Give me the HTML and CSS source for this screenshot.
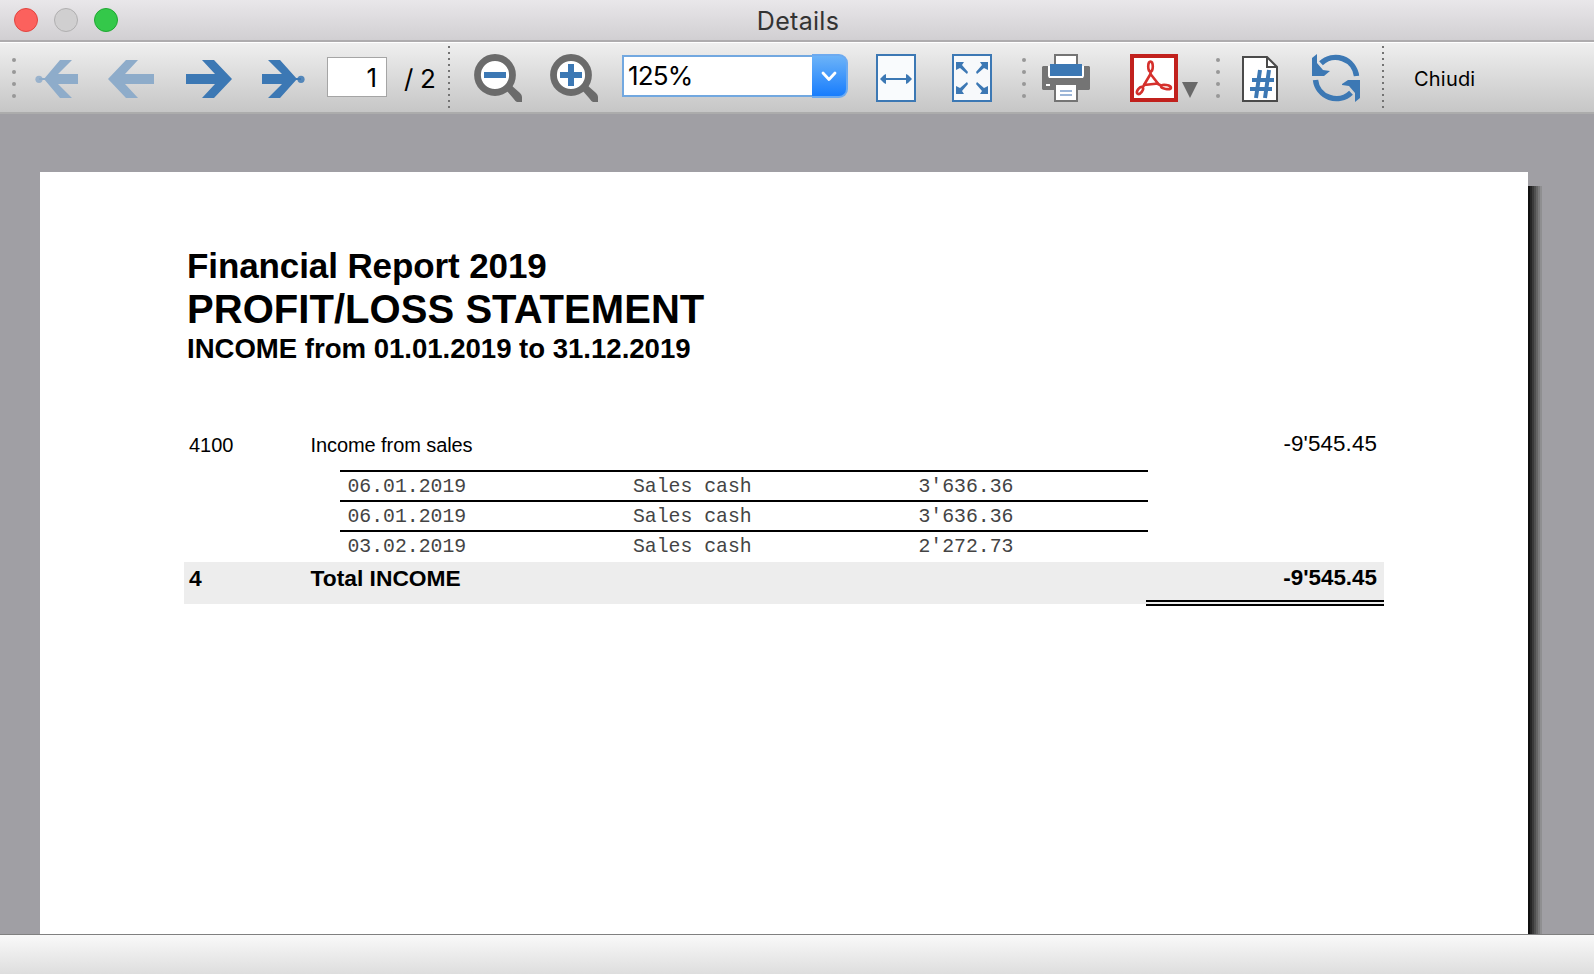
FILE: index.html
```
<!DOCTYPE html>
<html lang="it">
<head>
<meta charset="utf-8">
<title>Details</title>
<link rel="stylesheet" href="styles.css">
</head>
<body>
<header class="titlebar">
  <div class="lights">
    <span class="light light-close"></span>
    <span class="light light-min"></span>
    <span class="light light-zoom"></span>
  </div>
  <h1 class="window-title">Details</h1>
</header>

<nav class="toolbar">
  <div class="grip grip-start"><i></i><i></i><i></i><i></i></div>
  <svg class="icon icon-first" width="44" height="48" viewBox="0 0 44 48" fill="#8eacca"><circle cx="5" cy="25.300" r="3.600" opacity=".85"/><path d="M5 24h6v2H5zM10 25 26 6h12L24 20h20v10H24L38 44H26z"/></svg>
  <svg class="icon icon-prev" width="46" height="48" viewBox="0 0 46 48" fill="#8eacca"><path d="M0 25 18 6h12L17 20h29v10H17L30 44H18z"/></svg>
  <svg class="icon icon-next" width="46" height="48" viewBox="0 0 46 48" fill="#3c78b4"><path d="M46 25 28 6H16l13 14H0v10h29L16 44h12z"/></svg>
  <svg class="icon icon-last" width="44" height="48" viewBox="0 0 44 48" fill="#3c78b4"><circle cx="39" cy="25.300" r="3.600" opacity=".85"/><path d="M39 24h-6v2h6zM35 25 18 6H6l14 14H0v10h20L6 44h12z"/></svg>
  <div class="page-input">1</div>
  <span class="page-count">/ 2</span>
  <span class="dots dots-pages"></span>
  <svg class="icon icon-out" width="48" height="48" viewBox="0 0 48 48"><path d="m32 36 5-5 9 8q2 2 2 4v5h-5q-2-1-4-4z" fill="#6b6b6b"/><circle cx="21" cy="21" r="17.500" fill="#fff" stroke="#6b6b6b" stroke-width="6.800"/><path d="M10 18h22v6H10z" fill="#3c78b4"/></svg>
  <svg class="icon icon-in" width="48" height="48" viewBox="0 0 48 48"><path d="m32 36 5-5 9 8q2 2 2 4v5h-5q-2-1-4-4z" fill="#6b6b6b"/><circle cx="21" cy="21" r="17.500" fill="#fff" stroke="#6b6b6b" stroke-width="6.800"/><path d="M10 18h8v-8h6v8h8v6h-8v8h-6v-8h-8z" fill="#3c78b4"/></svg>
  <div class="combo">
    <span class="combo-value">125%</span>
    <span class="combo-button"><svg width="18" height="12" viewBox="0 0 18 12"><path d="m3 3 6 6.500L15 3" fill="none" stroke="#fff" stroke-width="2.800" stroke-linecap="round" stroke-linejoin="round"/></svg></span>
  </div>
  <svg class="icon icon-width" width="40" height="48" viewBox="0 0 40 48"><path d="M1 1h38v46H1z" fill="#f9fbfd" stroke="#3c78b4" stroke-width="2"/><path d="M4 25l4-4 2-1v4h20v-4l2 1 4 4-4 4-2 1v-4H10v4l-2-1z" fill="#3c78b4"/></svg>
  <svg class="icon icon-fit" width="40" height="48" viewBox="0 0 40 48"><path d="M1 1h38v46H1z" fill="#f7f9fb" stroke="#3c78b4" stroke-width="2"/><path d="M4 8h8l-2 3 6 7-1 2-7-6-4 2zM36 8h-8l2 3-6 7 1 2 7-6 4 2zM4 40h8l-2-3 6-7-1-2-7 6-4-2zM36 40h-8l2-3-6-7 1-2 7 6 4-2z" fill="#3c78b4"/></svg>
  <div class="grip grip-print"><i></i><i></i><i></i><i></i></div>
  <svg class="icon icon-print" width="48" height="48" viewBox="0 0 48 48"><path d="M13 1h22v14H13z" fill="#fff" stroke="#747474" stroke-width="2"/><path d="M1 12h5v10h36V12h5l1 1v22l-1 1H1l-1-1V13z" fill="#747474"/><path d="M6 12h36v10l-1 2H7l-1-2z" fill="#fff"/><path d="M8 10h32v12H8z" fill="#3c78b4"/><path d="M4 30h4v2H4z" fill="#fff"/><path d="M13 32h22v15H13z" fill="#fff" stroke="#747474" stroke-width="2"/><path d="M14 31h20v3H14z" fill="#fff"/><path d="M18 36h12v2H18zM18 40h12v2H18z" fill="#9cb6d8"/></svg>
  <svg class="icon icon-pdf" width="48" height="48" viewBox="0 0 48 48"><path d="M2 2h44v44H2z" fill="#fff" stroke="#c1211d" stroke-width="4"/><g fill="none" stroke="#d5302c" stroke-width="2.600" stroke-linejoin="round"><path d="M20.500 20 14 31l14-1.500z"/><ellipse cx="20.500" cy="12.500" rx="2.300" ry="5"/><path d="M20.500 17v4"/><ellipse cx="10" cy="36.500" rx="2.200" ry="4" transform="rotate(38 10 36.500)"/><path d="m12 34 3-4"/><ellipse cx="36" cy="33" rx="5" ry="2" transform="rotate(8 36 33)"/><path d="m26 29 6 3"/></g></svg>
  <svg class="icon icon-menu" width="16" height="48" viewBox="0 0 16 48"><path d="M0 28h16L8 44z" fill="#696969"/></svg>
  <div class="grip grip-page"><i></i><i></i><i></i><i></i></div>
  <svg class="icon icon-number" width="36" height="48" viewBox="0 0 36 48"><path d="M1 3h24l10 10v34H1z" fill="#fff" stroke="#4a4a4a" stroke-width="2"/><path d="M25 3v10h10" fill="none" stroke="#4a4a4a" stroke-width="2"/><path d="M18 16 14 44M27 16l-4 28M10 26h22M8 35h22" fill="none" stroke="#3c78b4" stroke-width="4"/></svg>
  <svg class="icon icon-refresh" width="48" height="48" viewBox="0 0 48 48"><path d="M9 9.300A21 21 0 0 1 44.500 22M39 38.700A21 21 0 0 1 3.500 26" fill="none" stroke="#3c78b4" stroke-width="5.400"/><path d="M0 4 5 0v9l6 7 7 1-6 5H0zM48 44l-5 4v-9l-6-7-7-1v-1l6-4h12z" fill="#3c78b4"/></svg>
  <span class="dots dots-close"></span>
  <span class="close-label">Chiudi</span>
</nav>

<main class="viewport">
  <article class="paper">
    <h2 class="report-name">Financial Report 2019</h2>
    <h3 class="report-title">PROFIT/LOSS STATEMENT</h3>
    <h4 class="report-period">INCOME from 01.01.2019 to 31.12.2019</h4>
    <div class="account">
      <span class="code">4100</span>
      <span class="label">Income from sales</span>
      <span class="amount">-9'545.45</span>
    </div>
    <div class="entries">
      <div class="entry"><span>06.01.2019</span><span>Sales cash</span><span>3'636.36</span></div>
      <div class="entry"><span>06.01.2019</span><span>Sales cash</span><span>3'636.36</span></div>
      <div class="entry"><span>03.02.2019</span><span>Sales cash</span><span>2'272.73</span></div>
    </div>
    <div class="total">
      <span class="code">4</span>
      <span class="label">Total INCOME</span>
      <span class="amount">-9'545.45</span>
    </div>
    <div class="double-rule"></div>
  </article>
  <div class="paper-shadow"></div>
</main>

<footer class="statusbar"></footer>
</body>
</html>
```

FILE: styles.css
```
* { box-sizing: border-box; }

body {
  margin: 0;
  width: 1594px;
  height: 974px;
  display: flex;
  flex-direction: column;
  overflow: hidden;
  font-family: Inter, "Liberation Sans", sans-serif;
  color: #000;
}

h1, h2, h3, h4 { margin: 0; }

/* Title bar */
.titlebar {
  height: 42px;
  flex: none;
  display: grid;
  grid-template-columns: 200px 1fr 200px;
  background: linear-gradient(#e9e7ea, #d1cfd2);
  border-bottom: 2px solid #aeacae;
}
.lights { display: flex; gap: 16px; padding: 8px 0 0 14px; }
.light { width: 24px; height: 24px; border-radius: 50%; border: 1px solid; }
.light-close { background: #fc615d; border-color: #e2443f; }
.light-min { background: #d0cfd0; border-color: #b0afb0; }
.light-zoom { background: #34c84a; border-color: #1fa832; }
.window-title {
  padding-left: 2px;
  text-align: center;
  font-size: 25px;
  font-weight: 400;
  line-height: 42px;
  letter-spacing: 0.3px;
  color: #333;
}

/* Toolbar */
.toolbar {
  height: 72px;
  flex: none;
  display: flex;
  align-items: flex-start;
  padding-top: 11px;
  background: linear-gradient(#efefef, #c6c6c6);
  border-top: 1px solid #fff;
  border-bottom: 2px solid #acacac;
}
.icon { flex: none; display: block; }
.grip {
  flex: none;
  width: 4px;
  padding-top: 4px;
  display: flex;
  flex-direction: column;
  gap: 8px;
}
.grip i { width: 4px; height: 4px; border-radius: 50%; background: #989898; }
.dots {
  flex: none;
  width: 2px;
  height: 62px;
  margin-top: -8px;
  background: repeating-linear-gradient(#737373 0 2px, transparent 2px 6px);
}
.grip-start { margin-left: 12px; }
.icon-first { margin-left: 18px; }
.icon-prev { margin-left: 30px; }
.icon-next { margin-left: 32px; }
.icon-last { margin-left: 30px; }
.page-input {
  width: 60px;
  height: 40px;
  margin: 3px 0 0 21px;
  padding-right: 9px;
  border: 1px solid #a5a5a5;
  background: #fff;
  text-align: right;
  font-size: 26px;
  line-height: 40px;
}
.page-count {
  width: 61px;
  padding-left: 17px;
  margin-top: 3px;
  font-size: 26px;
  line-height: 43px;
  letter-spacing: -0.4px;
  white-space: nowrap;
}
.icon-out { margin-left: 24px; }
.icon-in { margin-left: 28px; }
.combo {
  width: 226px;
  height: 44px;
  margin-left: 24px;
  display: flex;
  align-items: center;
}
.combo-value {
  width: 190px;
  height: 42px;
  padding-left: 4px;
  border: 2px solid #72a8e0;
  border-right: 0;
  background: #fff;
  font-size: 26px;
  line-height: 38px;
  letter-spacing: -0.8px;
}
.combo-button {
  width: 36px;
  height: 44px;
  display: flex;
  align-items: center;
  justify-content: center;
  border: 2px solid #6caaf0;
  border-left: 0;
  border-radius: 0 9px 9px 0;
  background: linear-gradient(#6cb3f8, #187dfd);
}
.icon-width { margin-left: 28px; }
.icon-fit { margin-left: 36px; }
.grip-print { margin-left: 30px; }
.icon-print { margin-left: 16px; }
.icon-pdf { margin-left: 40px; }
.icon-menu { margin-left: 4px; }
.grip-page { margin-left: 18px; }
.icon-number { margin-left: 22px; }
.icon-refresh { margin-left: 34px; }
.dots-close { margin-left: 22px; }
.close-label {
  margin-left: 30px;
  font-size: 20px;
  line-height: 50px;
  letter-spacing: 0.2px;
}

/* Document */
.viewport {
  flex: 1;
  min-height: 0;
  display: flex;
  padding: 58px 0 0 40px;
  background: #a09fa4;
  overflow: hidden;
}
.paper {
  width: 1488px;
  padding: 74px 144px 0 144px;
  background: #fff;
  font-family: "Liberation Sans", Arial, sans-serif;
}
.paper-shadow {
  width: 14px;
  margin-top: 14px;
  background: linear-gradient(90deg,
    #101010 0 2px, #262626 2px 4px, #3b3b3b 4px 6px, #505050 6px 8px,
    #656565 8px 10px, #7a7a7b 10px 12px, #8f8f91 12px);
}
.report-name { font-size: 35px; line-height: 40px; padding-left: 3px; letter-spacing: -0.1px; white-space: nowrap; }
.report-title { font-size: 40px; line-height: 46px; padding-left: 3px; letter-spacing: 0.05px; white-space: nowrap; }
.report-period { font-size: 27.6px; line-height: 33px; padding-left: 3px; letter-spacing: -0.03px; white-space: nowrap; }
.account, .total {
  display: grid;
  grid-template-columns: 121.5px 1fr 200px;
  padding: 0 7px 0 5px;
}
.account { margin-top: 66px; height: 39px; font-size: 20px; line-height: 28px; }
.account .label { letter-spacing: -0.08px; }
.amount { text-align: right; font-size: 22.4px; }
.account .amount { line-height: 26px; letter-spacing: 0.1px; }
.entries { margin-left: 156px; width: 808px; }
.entry {
  height: 30px;
  display: grid;
  grid-template-columns: 285.5px 285.5px 1fr;
  padding-left: 7.5px;
  border-top: 2px solid #000;
  font-family: "Liberation Mono", "Courier New", monospace;
  font-size: 19.8px;
  line-height: 30px;
  color: #444;
}
.total {
  height: 42px;
  margin-top: 2px;
  background: #ededed;
  font-size: 22.4px;
  font-weight: 700;
  line-height: 32px;
}
.total .code, .total .label { font-size: 22.8px; }
.double-rule {
  width: 238px;
  height: 6px;
  margin: -4px 0 0 auto;
  border-top: 2px solid #000;
  border-bottom: 2px solid #000;
}

/* Status bar */
.statusbar {
  height: 40px;
  flex: none;
  border-top: 1px solid #808080;
  background: linear-gradient(#f9f9f9, #dedede);
}
```
